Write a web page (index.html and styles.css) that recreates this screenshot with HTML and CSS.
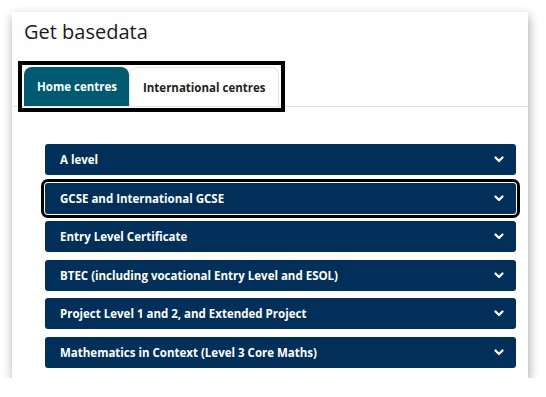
FILE: index.html
```html
<!DOCTYPE html>
<html lang="en">
<head>
    <meta charset="UTF-8">
    <meta name="viewport" content="width=device-width, initial-scale=1.0">
    <title>Get basedata</title>
    <link rel="stylesheet" href="styles.css">
</head>
<body>
    <div class="card">
        <h1 class="title">Get basedata</h1>
        <div class="tab-bar">
            <div class="tabs" role="tablist">
                <button class="tab active" role="tab">Home centres</button>
                <button class="tab" role="tab">International centres</button>
            </div>
        </div>
        <div class="accordion">
            <button class="acc-row">A level<svg class="chev" viewBox="0 0 10 7"><path d="M1.5 1.5 L5 5 L8.5 1.5"/></svg></button>
            <button class="acc-row focused">GCSE and International GCSE<svg class="chev" viewBox="0 0 10 7"><path d="M1.5 1.5 L5 5 L8.5 1.5"/></svg></button>
            <button class="acc-row">Entry Level Certificate<svg class="chev" viewBox="0 0 10 7"><path d="M1.5 1.5 L5 5 L8.5 1.5"/></svg></button>
            <button class="acc-row">BTEC (including vocational Entry Level and ESOL)<svg class="chev" viewBox="0 0 10 7"><path d="M1.5 1.5 L5 5 L8.5 1.5"/></svg></button>
            <button class="acc-row">Project Level 1 and 2, and Extended Project<svg class="chev" viewBox="0 0 10 7"><path d="M1.5 1.5 L5 5 L8.5 1.5"/></svg></button>
            <button class="acc-row">Mathematics in Context (Level 3 Core Maths)<svg class="chev" viewBox="0 0 10 7"><path d="M1.5 1.5 L5 5 L8.5 1.5"/></svg></button>
        </div>
    </div>
</body>
</html>
```
FILE: styles.css
```css
body {
    margin: 0;
    background-color: white;
    font-family: "Open Sans", "Liberation Sans", sans-serif;
    color: #222;
}
.card {
    margin: 12px 0 0 12px;
    width: 516px;
    height: 366px;
    background-color: white;
    box-shadow: 1px 4px 10px rgba(0, 0, 0, 0.35);
    box-sizing: border-box;
}
.title {
    margin: 0;
    padding: 6px 12px 0 12px;
    font-size: 20px;
    font-weight: normal;
    line-height: 28px;
    color: #1a1a1a;
}
.tab-bar {
    margin-top: 21px;
    padding-left: 12px;
    border-bottom: 1px solid #e4e4e4;
    display: flex;
}
.tabs {
    display: inline-flex;
    outline: 4px solid black;
    outline-offset: 2px;
}
.tab {
    height: 39px;
    padding: 0 13px;
    border: 1px solid #e4e4e4;
    border-bottom: none;
    border-radius: 8px 8px 0 0;
    background-color: white;
    color: #222;
    font-family: inherit;
    font-size: 11.5px;
    font-weight: bold;
    cursor: pointer;
}
.tab.active {
    padding: 0 12px 0 13px;
    background-color: #005a70;
    border: none;
    color: white;
}
.accordion {
    padding: 37px 12px 0 33px;
    display: flex;
    flex-direction: column;
    gap: 7.5px;
}
.acc-row {
    height: 31px;
    padding: 0 12px 0 15px;
    display: flex;
    align-items: center;
    justify-content: space-between;
    border: none;
    border-radius: 3px;
    background-color: #00305a;
    color: white;
    font-family: inherit;
    font-size: 11.5px;
    font-weight: bold;
    text-align: left;
    cursor: pointer;
}
.acc-row.focused {
    outline: 3px solid black;
    outline-offset: 1px;
}
.chev {
    width: 10px;
    height: 7px;
    fill: none;
    stroke: white;
    stroke-width: 2.2;
    stroke-linecap: round;
    stroke-linejoin: round;
}
```
